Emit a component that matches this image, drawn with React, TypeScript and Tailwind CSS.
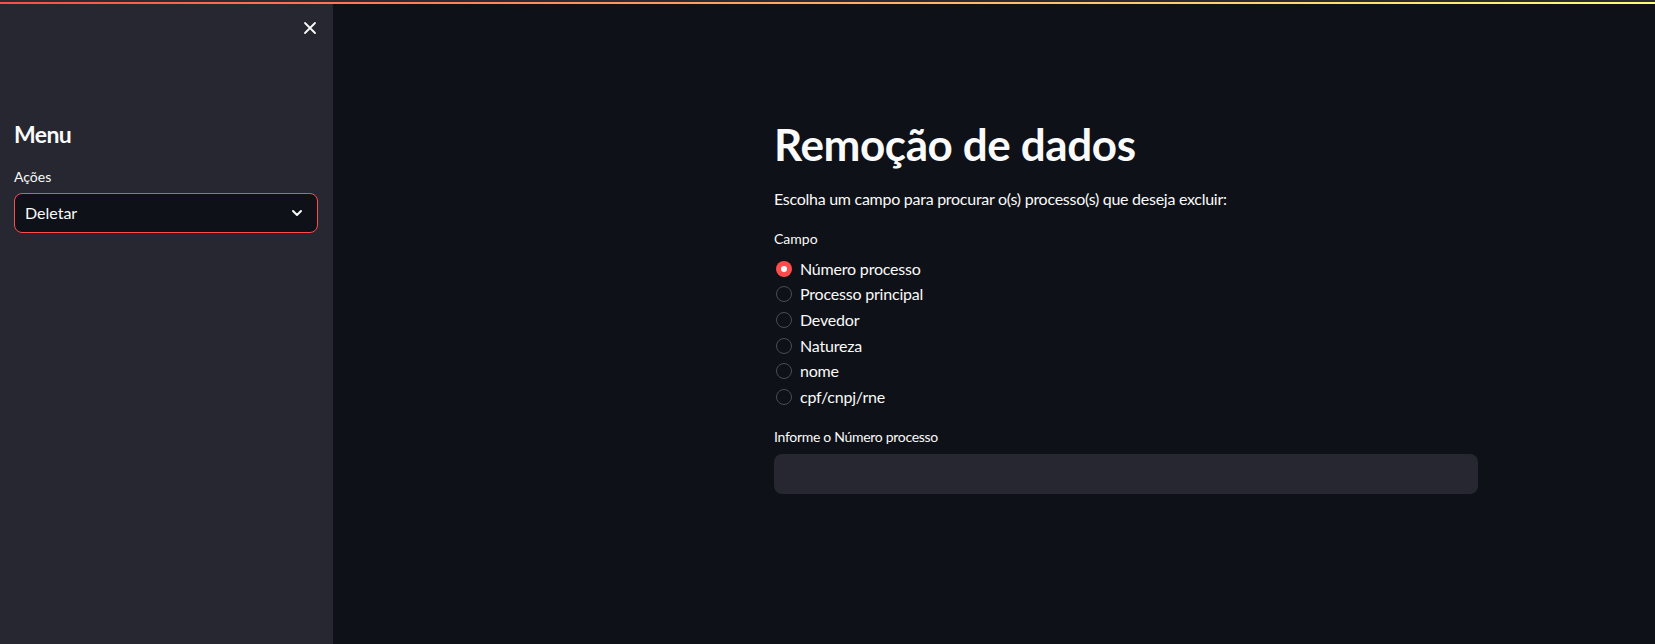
import React from "react";

const options = [
  "Número processo",
  "Processo principal",
  "Devedor",
  "Natureza",
  "nome",
  "cpf/cnpj/rne",
];

export default function App() {
  return (
    <div
      className="w-full h-[644px] flex flex-col bg-[#0e1117] text-[#fafafa] overflow-hidden"
      style={{ fontFamily: "Lato, 'Noto Sans', sans-serif" }}
    >
      <div className="h-[2px] bg-[#2a2b35]" />
      <div className="h-[2px] bg-gradient-to-r from-[#ff4b4b] to-[#fffd80]" />
      <div className="flex flex-1">
        <aside className="w-[333px] bg-[#262730] px-[14px] pt-[17px] flex flex-col">
          <div className="flex justify-end pr-[2px]">
            <svg width="14" height="14" viewBox="0 0 14 14" className="text-[#fafafa]">
              <path d="M2 2 L12 12 M12 2 L2 12" stroke="currentColor" strokeWidth="1.8" strokeLinecap="round" />
            </svg>
          </div>
          <h2 className="mt-[83px] h-[32px] leading-[32px] text-[23px] font-bold tracking-[-0.6px]">Menu</h2>
          <div className="mt-[17px] h-[20px] leading-[20px] text-[14px]">Ações</div>
          <div className="mt-[6px] h-[40px] w-[304px] rounded-lg border border-[#ff4b4b] bg-[#0e1117] flex items-center justify-between pl-[10px] pr-[14px]">
            <span className="text-[16px]">Deletar</span>
            <svg width="12" height="8" viewBox="0 0 12 8">
              <path d="M2 2 L6 6 L10 2" stroke="#fafafa" strokeWidth="2" fill="none" strokeLinecap="round" strokeLinejoin="round" />
            </svg>
          </div>
        </aside>
        <main className="flex-1">
          <div className="ml-[441px] w-[704px] pt-[114px] flex flex-col">
            <h1 className="h-[53px] leading-[53px] text-[44px] font-bold tracking-[-0.4px]">Remoção de dados</h1>
            <p className="mt-[16px] h-[24px] leading-[24px] text-[16px] tracking-[-0.27px]">
              Escolha um campo para procurar o(s) processo(s) que deseja excluir:
            </p>
            <div className="mt-[18px] h-[20px] leading-[20px] text-[14px]">Campo</div>
            <div className="mt-[7px] flex flex-col">
              {options.map((o, i) => (
                <div key={o} className="h-[25.6px] flex items-center gap-[8px] pl-[2px]">
                  {i === 0 ? (
                    <span className="w-[16px] h-[16px] rounded-full bg-[#ff4b4b] flex items-center justify-center">
                      <span className="w-[6px] h-[6px] rounded-full bg-white" />
                    </span>
                  ) : (
                    <span className="w-[16px] h-[16px] rounded-full border border-[#4a4c57]" />
                  )}
                  <span className="text-[16px] leading-[24px] tracking-[-0.2px]">{o}</span>
                </div>
              ))}
            </div>
            <div className="mt-[17px] h-[20px] leading-[20px] text-[14px] tracking-[-0.3px]">Informe o Número processo</div>
            <div className="mt-[7px] h-[40px] w-full rounded-lg bg-[#262730]" />
          </div>
        </main>
      </div>
    </div>
  );
}
